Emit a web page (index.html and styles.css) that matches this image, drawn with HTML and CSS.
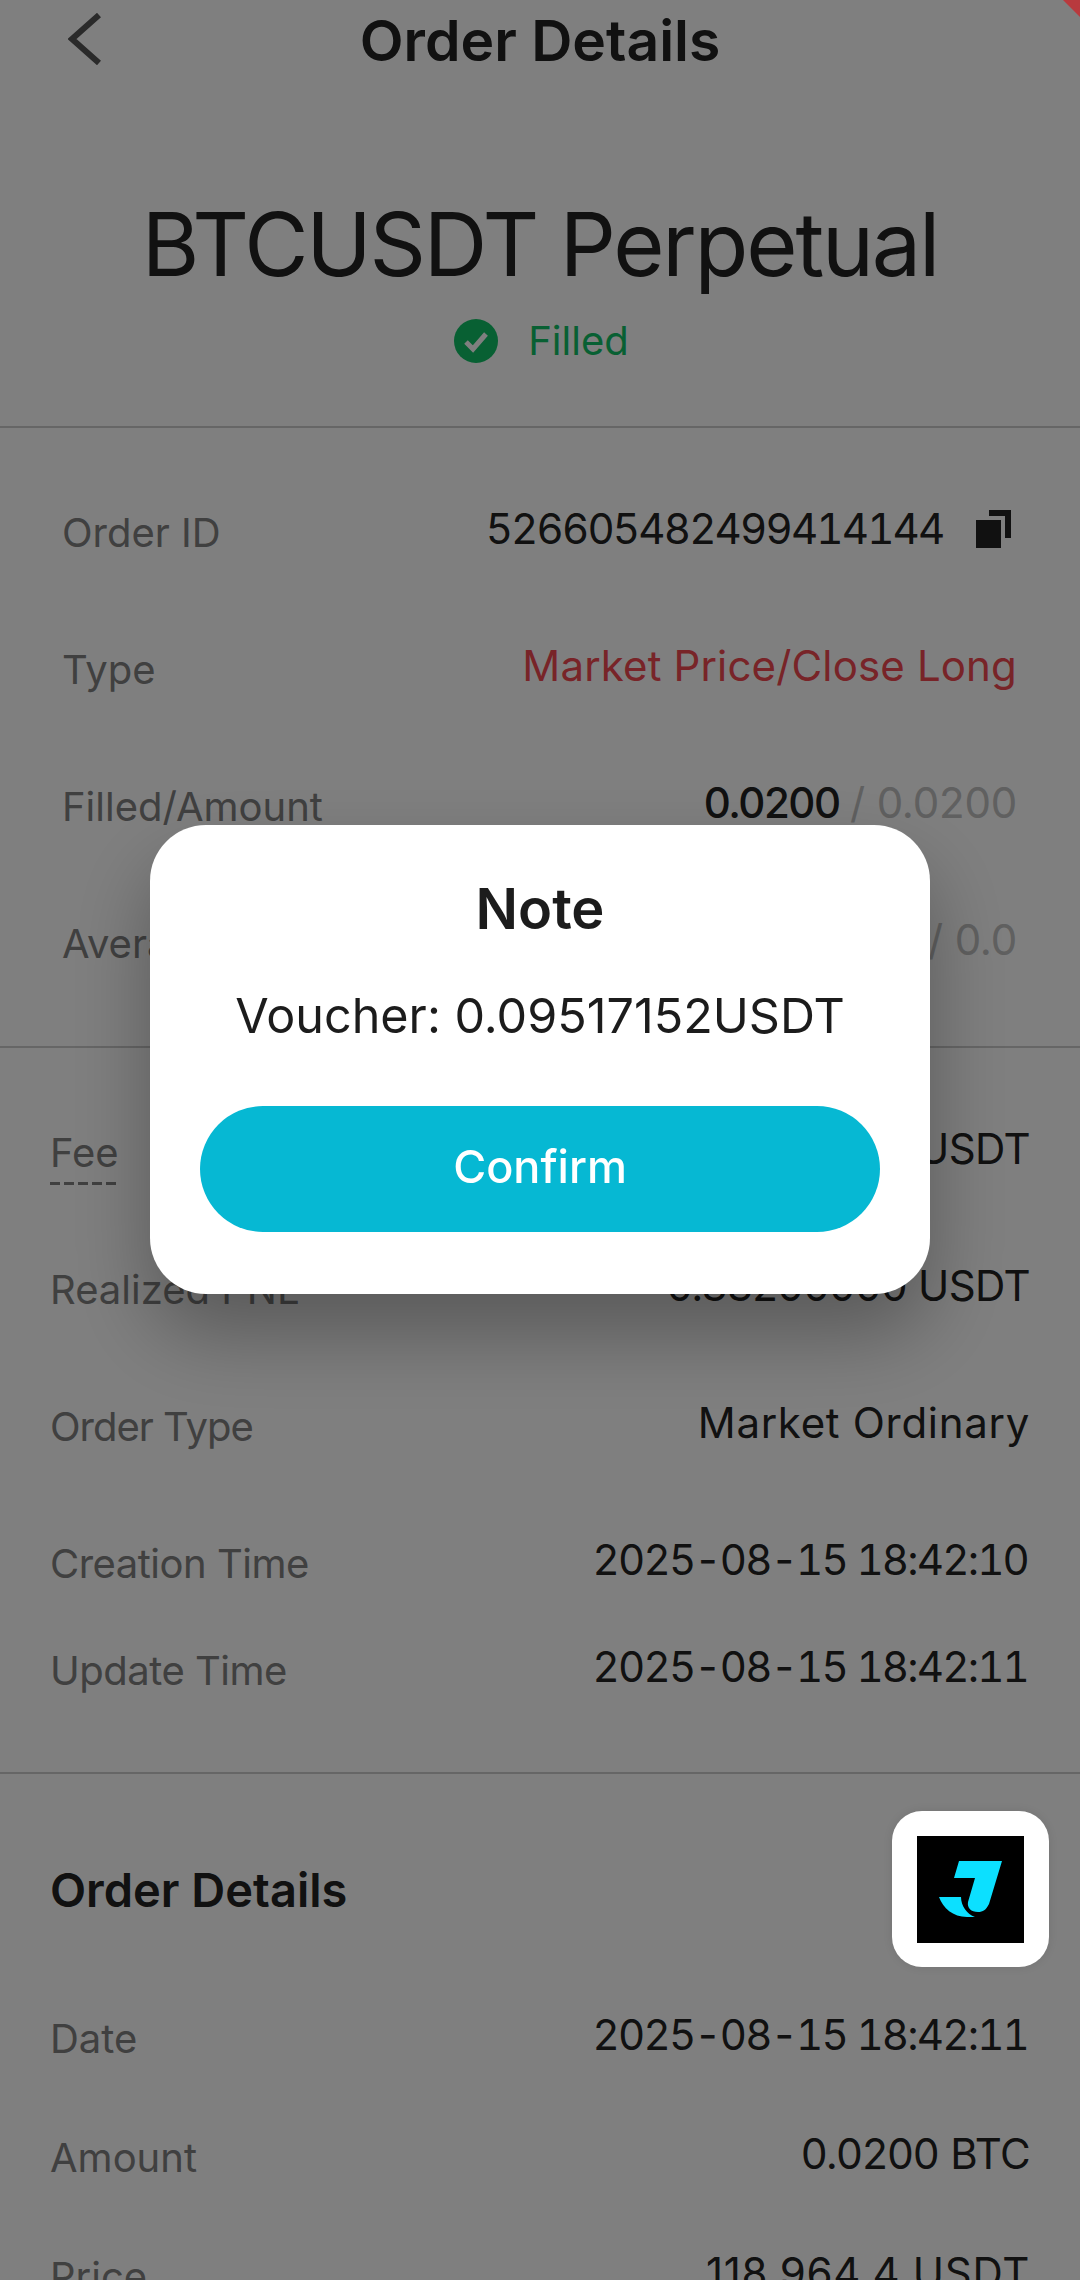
FILE: index.html
```html
<!DOCTYPE html>
<html lang="en">
<head>
  <meta charset="UTF-8" />
  <meta name="viewport" content="width=device-width, initial-scale=1.0" />
  <title>Order Details</title>
  <link rel="stylesheet" href="styles.css">
</head>
<body>
  <div class="page">
    <header class="topbar">
      <svg class="back" width="34" height="52" viewBox="0 0 34 52"><path d="M31 2 L4 26 L31 50" fill="none" stroke="#555" stroke-width="6"/></svg>
      <h1>Order Details</h1>
    </header>

    <section class="summary">
      <h2>BTCUSDT Perpetual</h2>
      <div class="status">
        <svg width="44" height="44" viewBox="0 0 44 44"><circle cx="22" cy="22" r="22" fill="#10c066"/><path d="M12 23 L19 30 L32 15" fill="none" stroke="#fff" stroke-width="5"/></svg>
        <span>Filled</span>
      </div>
    </section>

    <section class="block block-a">
      <div class="row"><span class="label">Order ID</span>
        <span class="value order-id">526605482499414144
          <svg class="copy" width="36" height="38" viewBox="0 0 36 38"><path d="M0 10 H25 V38 H0 Z" fill="#222"/><path d="M13 0 H35 V28 H29 V6 H13 Z" fill="#222"/></svg>
        </span></div>
      <div class="row"><span class="label">Type</span><span class="value red">Market Price/Close Long</span></div>
      <div class="row"><span class="label">Filled/Amount</span><span class="value"><b>0.0200</b> <i>/ 0.0200</i></span></div>
      <div class="row"><span class="label">Average Price</span><span class="value"><i>/ 0.0</i></span></div>
    </section>

    <section class="block block-b">
      <div class="row"><span class="label dashed">Fee</span><span class="value narrow">0.09517152 USDT</span></div>
      <div class="row"><span class="label">Realized PNL</span><span class="value narrow">0.33200000 USDT</span></div>
      <div class="row"><span class="label tighter">Order Type</span><span class="value wide">Market Ordinary</span></div>
      <div class="row short"><span class="label tight">Creation Time</span><span class="value date">2025-08-15 18:42:10</span></div>
      <div class="row"><span class="label tight">Update Time</span><span class="value date">2025-08-15 18:42:11</span></div>
    </section>

    <section class="block block-c">
      <h3>Order Details</h3>
      <div class="row detail"><span class="label">Date</span><span class="value date">2025-08-15 18:42:11</span></div>
      <div class="row detail"><span class="label">Amount</span><span class="value narrow">0.0200 BTC</span></div>
      <div class="row detail"><span class="label">Price</span><span class="value wide">118,964.4 USDT</span></div>
    </section>
  </div>

  <div class="scrim">
    <div class="modal">
      <div class="modal-title">Note</div>
      <div class="modal-text">Voucher: 0.09517152USDT</div>
      <button class="confirm">Confirm</button>
    </div>
  </div>

  <div class="ribbon"></div>

  <div class="floater">
    <svg width="107" height="107" viewBox="0 0 107 107">
      <rect width="107" height="107" fill="#000"/>
      <path d="M42 25 H85 L72 68 C69 74 66 76 61 76 C54 76 50 72 51 66 L58 42 H37 Z" fill="#0ce0ff"/>
      <path d="M22 61 H44 C44 70 50 78 58 81 H50 C36 81 26 72 22 61 Z" fill="#0ce0ff"/>
    </svg>
  </div>
</body>
</html>
```

FILE: styles.css
```css
* {
  box-sizing: border-box;
}

body {
  margin: 0;
  height: 2280px;
  overflow: hidden;
  background: #fff;
  font-family: "Inter", "Noto Sans", sans-serif;
  color: #222;
}

.page {
  height: 2280px;
  overflow: hidden;
  position: relative;
}

.topbar {
  height: 80px;
  display: flex;
  align-items: center;
  justify-content: center;
  position: relative;
}

.topbar h1 {
  margin: 0;
  font-size: 57px;
  font-weight: 600;
}

.back {
  position: absolute;
  left: 68px;
  top: 13px;
}

.summary {
  height: 348px;
  padding-top: 110px;
  text-align: center;
  border-bottom: 2px solid #ccc;
}

.summary h2 {
  margin: 0;
  font-size: 88px;
  line-height: 108px;
  font-weight: 420;
  letter-spacing: -2.2px;
}

.status {
  display: flex;
  align-items: center;
  justify-content: center;
  gap: 30px;
  margin: 18px 0 0 3px;
  font-size: 40px;
  color: #10c066;
}

.block {
  border-bottom: 2px solid #ccc;
}

.block-a {
  padding: 75px 63px 0 62px;
  height: 620px;
}

.block-b {
  padding: 75px 50px 0;
  height: 726px;
}

.block-c {
  border-bottom: 0;
  padding: 87px 50px 0;
}

.row {
  height: 137px;
  display: flex;
  justify-content: space-between;
  align-items: flex-start;
}

.row.short {
  height: 107px;
}

.row.detail {
  height: 119px;
}

.label {
  font-size: 40px;
  line-height: 60px;
  color: #808080;
}

.tight {
  letter-spacing: -0.5px;
}

.tighter {
  letter-spacing: -1px;
}

.value {
  font-size: 42px;
  line-height: 60px;
  font-weight: 420;
  margin-top: -4px;
  display: flex;
  align-items: center;
  gap: 0.25em;
}

.value b {
  font-weight: 550;
  letter-spacing: -1.5px;
}

.value i {
  font-style: normal;
  color: #c0c0c0;
  letter-spacing: -0.2px;
}

.order-id {
  letter-spacing: -1.8px;
  font-variant-numeric: tabular-nums;
}

.date {
  font-variant-numeric: tabular-nums;
  letter-spacing: -1.8px;
  margin-right: 2px;
}

.wide {
  letter-spacing: 0.7px;
}

.narrow {
  letter-spacing: -0.6px;
}

.red {
  color: #f04850;
  letter-spacing: 0.15px;
}

.copy {
  margin-left: 22px;
  margin-right: 5px;
}

.dashed {
  height: 62px;
  background: repeating-linear-gradient(90deg, #808080 0 10px, transparent 10px 14px) bottom / 100% 3px no-repeat;
}

.block-c h3 {
  margin: 0 0 91px;
  font-size: 47px;
  font-weight: 600;
}

.scrim {
  position: fixed;
  inset: 0;
  background: rgba(0, 0, 0, 0.5);
}

.ribbon {
  position: fixed;
  top: -12px;
  right: -12px;
  width: 24px;
  height: 24px;
  background: #b83a3e;
  transform: rotate(45deg);
}

.modal {
  position: absolute;
  left: 150px;
  top: 825px;
  width: 780px;
  height: 469px;
  background: #fff;
  border-radius: 56px;
  box-shadow: 0 40px 80px rgba(0, 0, 0, 0.3);
  padding: 50px 50px 0;
  text-align: center;
  color: #1c1c1c;
}

.modal-title {
  font-size: 56px;
  font-weight: 600;
  line-height: 68px;
}

.modal-text {
  margin-top: 43px;
  font-size: 48.5px;
  line-height: 60px;
}

.confirm {
  display: block;
  width: 680px;
  height: 126px;
  margin-top: 60px;
  padding: 0 0 5px;
  border: 0;
  border-radius: 63px;
  background: #06b8d3;
  color: #fff;
  font-family: inherit;
  font-size: 45px;
  font-weight: 500;
}

.floater {
  position: fixed;
  left: 892px;
  top: 1811px;
  width: 157px;
  height: 156px;
  background: #fff;
  border-radius: 30px;
  box-shadow: 0 0 12px rgba(0, 0, 0, 0.1);
  display: flex;
  align-items: center;
  justify-content: center;
}
```
